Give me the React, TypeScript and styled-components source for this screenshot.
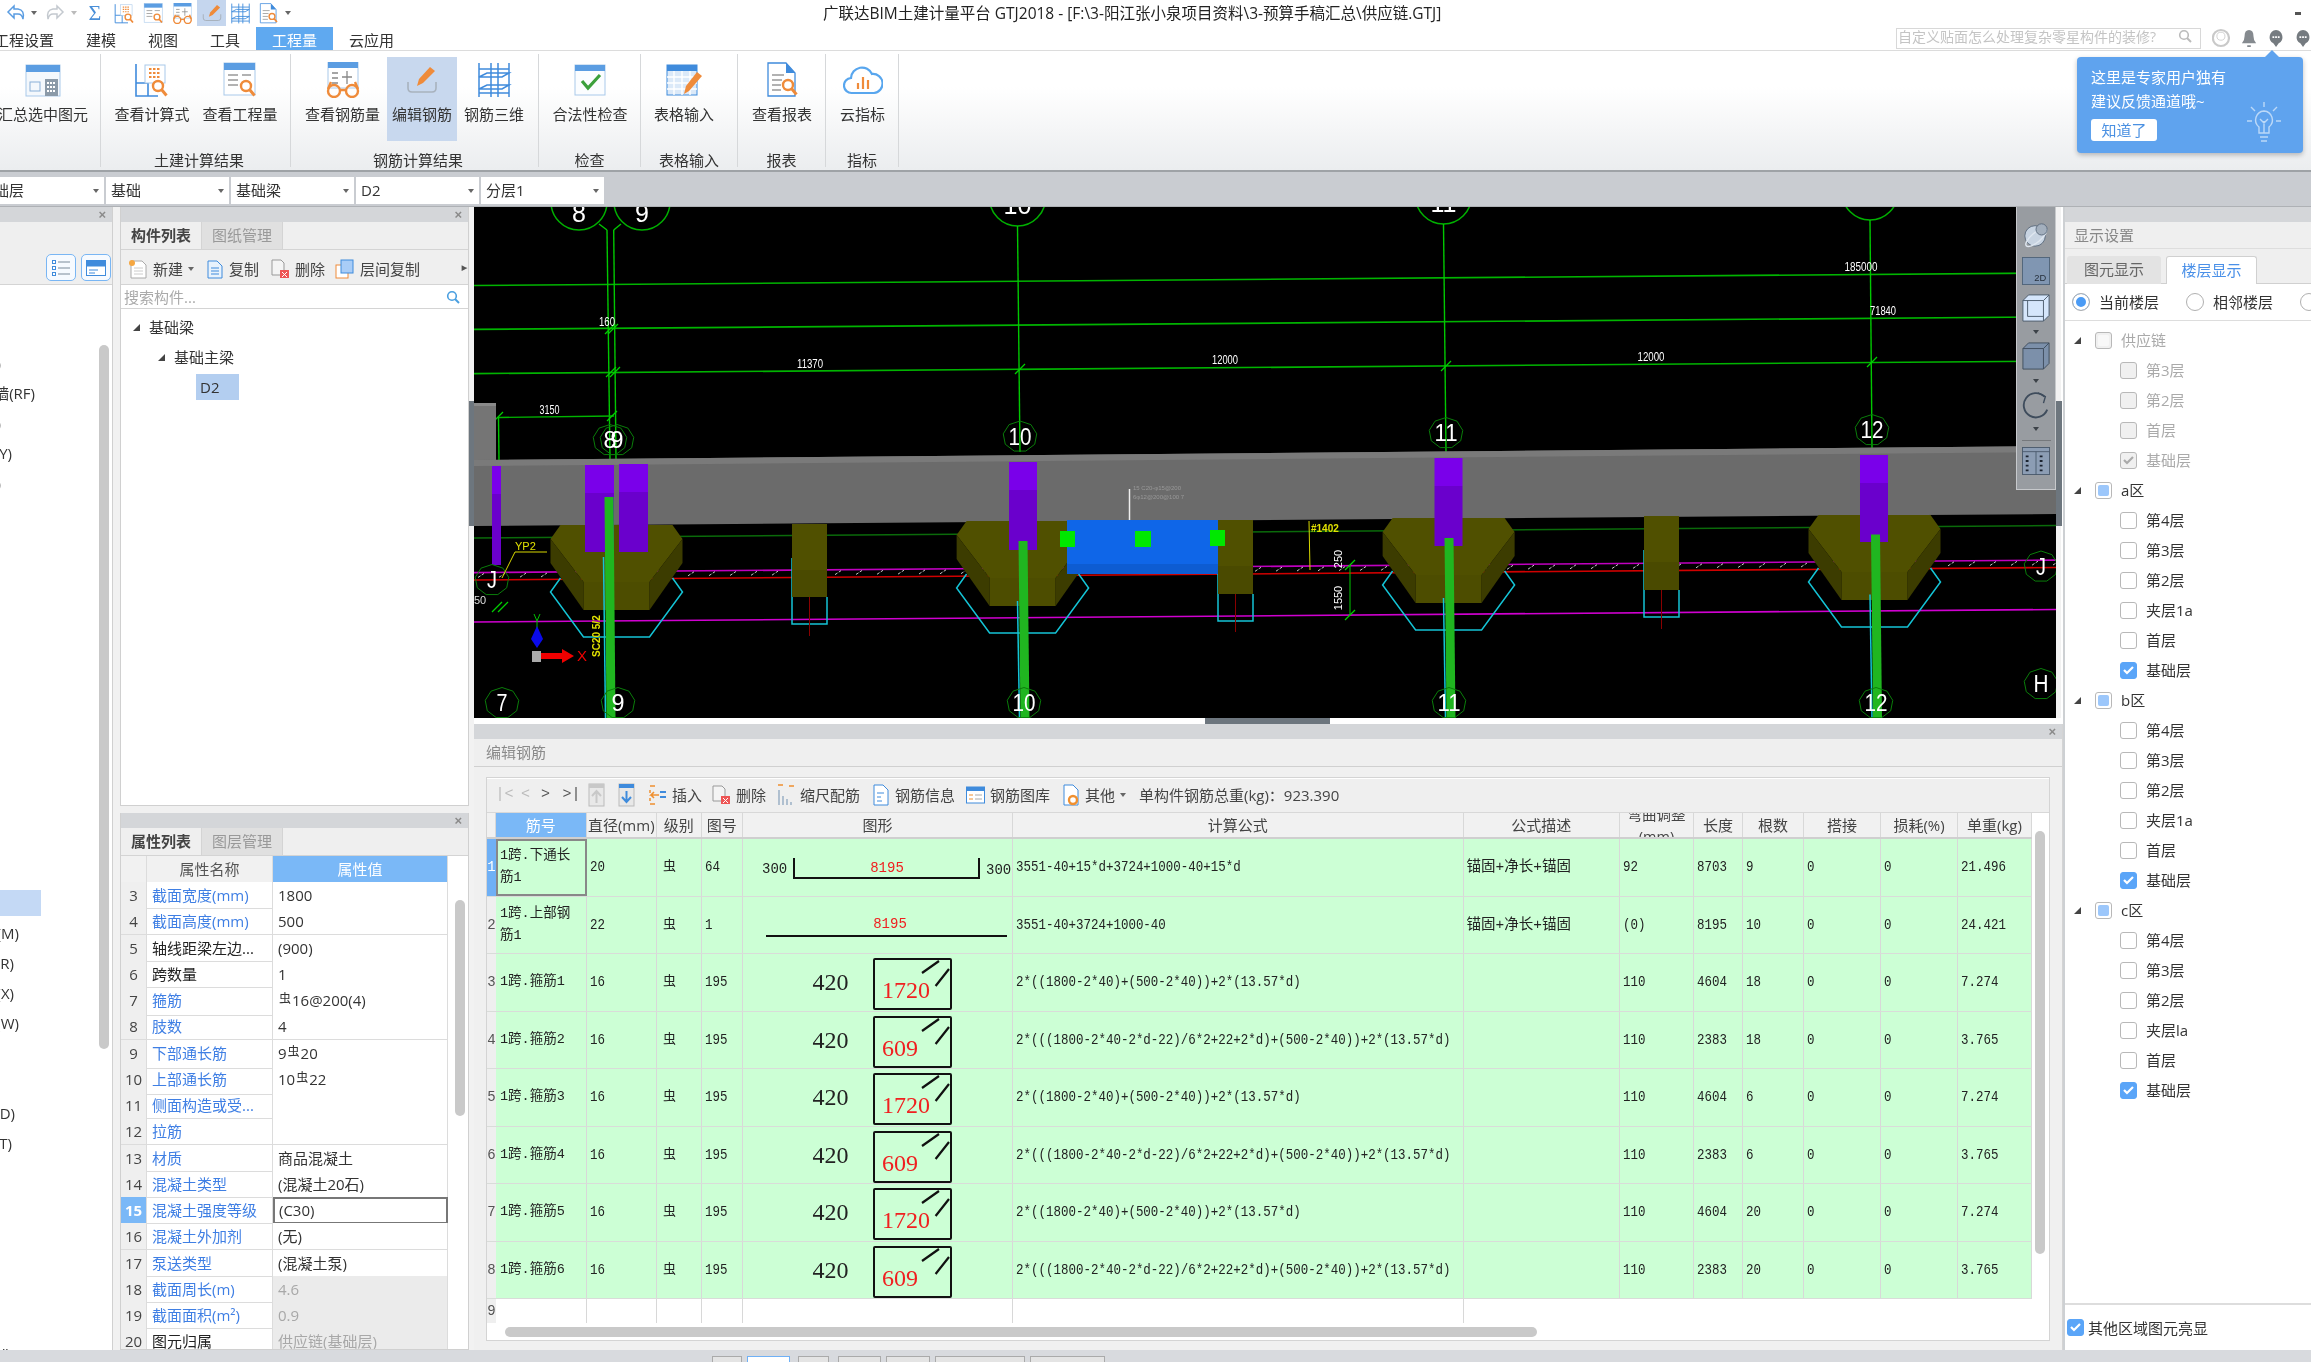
import React from 'react';
import styled, { createGlobalStyle } from 'styled-components';

const Global = createGlobalStyle`
  html, body { margin: 0; padding: 0; overflow: hidden; background: #fff; }
  * { box-sizing: border-box; }
`;

const SANS = `"Open Sans","Noto Sans CJK SC",sans-serif`;
const MONO = `"Liberation Mono","Noto Sans CJK SC",monospace`;

const Page = styled.div`
  position: relative; width: 2311px; height: 1362px; overflow: hidden;
  display: flex; flex-direction: column; background: #fff;
  font: 15px/20px ${SANS}; color: #333; filter: blur(0.5px);
`;

/* ---------- title bar ---------- */
const TitleBar = styled.div`height: 26px; display: flex; align-items: center; flex: none;`;
const Qat = styled.div`display: flex; width: 300px; height: 26px; padding-left: 6px; flex: none;`;
const QatSlot = styled.div<{ $w: number; $on?: boolean }>`
  width: ${p => p.$w}px; height: 26px; display: flex; align-items: center; justify-content: center;
  background: ${p => (p.$on ? '#c5d6ee' : 'transparent')}; flex: none;
  color: #4a8fd8; font: 22px/26px "Liberation Serif", serif;
`;
const Tri = styled.i<{ $c?: string }>`
  display: block; width: 0; height: 0; border-left: 3px solid transparent; border-right: 3px solid transparent;
  border-top: 4px solid ${p => p.$c || '#666'};
`;
const Title = styled.div`margin-left: 523px; font-size: 15.5px; line-height: 26px; color: #222; white-space: nowrap;`;
const MinGlyph = styled.div`margin-left: auto; margin-right: 10px; width: 6px; height: 3px; background: #555;`;

const TabBar = styled.div`
  height: 25px; display: flex; align-items: stretch; flex: none; padding-left: 0;
  border-bottom: 1px solid #dcdcdc;
`;
const TabItem = styled.div<{ $on?: boolean; $first?: boolean }>`
  padding: 0 16px; line-height: ${p => (p.$on ? 26 : 28)}px; font-size: 15px; color: ${p => (p.$on ? '#fff' : '#333')};
  background: ${p => (p.$on ? '#5fa9f0' : 'transparent')}; margin-left: ${p => (p.$first ? '-22px' : '0')};
  margin-top: ${p => (p.$on ? 1 : 0)}px;
`;
const TopRight = styled.div`margin-left: auto; display: flex; align-items: center; height: 22px; margin-top: 1px;`;
const SearchTop = styled.div`
  width: 305px; height: 21px; border: 1px solid #d8d8d8; font-size: 14px; line-height: 15px; color: #c4c4c4;
  display: flex; justify-content: space-between; padding: 0 8px 0 1px; overflow: hidden; white-space: nowrap; background: #fff;
`;
const TopIcons = styled.div`display: flex; width: 110px; padding-left: 11px; gap: 11px; align-items: center;`;

/* ---------- ribbon ---------- */
const Ribbon = styled.div`
  height: 121px; flex: none; display: flex; border-bottom: 2px solid #9ea2a6;
  background: linear-gradient(#fff 0%, #fff 30%, #ebedef 100%);
`;
const Group = styled.div<{ $w: number; $pl?: number }>`
  width: ${p => p.$w}px; flex: none; height: 113px; margin-top: 3px; border-right: 1px solid #d6d8da;
  display: flex; flex-direction: column; padding-left: ${p => p.$pl || 0}px;
`;
const GroupItems = styled.div`display: flex; height: 84px; margin-top: 3px; flex: none;`;
const GroupLabel = styled.div`text-align: center; font-size: 15px; line-height: 16px; margin-top: 11px; color: #333; white-space: nowrap;`;
const RibbonBtn = styled.div<{ $w: number; $on?: boolean }>`
  width: ${p => p.$w}px; flex: none; height: 84px; display: flex; flex-direction: column; align-items: center;
  background: ${p => (p.$on ? '#c8d8ee' : 'transparent')}; white-space: nowrap;
`;
const RibbonIcon = styled.div`height: 43px; margin-top: 1px; display: flex; align-items: center; justify-content: center; flex: none;`;
const RibbonText = styled.div`font-size: 15px; line-height: 20px; margin-top: 3px; color: #333;`;

/* ---------- selects ---------- */
const SelectBar = styled.div`
  height: 35px; flex: none; background: #c9ccd1; display: flex; gap: 2px; padding-top: 5px; margin-left: -21px;
  width: 2332px; border-bottom: 1px solid #aeb1b5;
`;
const Select = styled.div`
  width: 123px; height: 27px; background: #fff; font-size: 15px; line-height: 27px; padding: 0 5px; display: flex;
  align-items: center; justify-content: space-between;
`;
const SelectFirst = styled(Select)`width: 125px; padding-left: 0; justify-content: space-between;`;

/* ---------- main ---------- */
const Main = styled.div`flex: 1; min-height: 0; display: flex; background: #f0f0f0;`;
const PanelStrip = styled.div`
  height: 15px; background: #d4d6d9; flex: none; display: flex; justify-content: flex-end; align-items: center;
  padding-right: 6px; color: #8a8a8a; font: 700 13px/15px "Liberation Sans", sans-serif;
`;

const LeftCol = styled.div`width: 113px; flex: none; display: flex; flex-direction: column; background: #fff; overflow: hidden; border-right: 1px solid #d0d0d0;`;
const LeftTabs = styled.div`height: 28px; background: #efefef; flex: none;`;
const LeftTool = styled.div`
  height: 35px; background: #efefef; border-bottom: 1px solid #d4d4d4; flex: none; display: flex; justify-content: flex-end; gap: 5px;
  padding: 4px 1px 0 0;
`;
const ViewBtn = styled.div`
  width: 30px; height: 27px; border: 1.5px solid #79b6f4; border-radius: 5px; background: #f6faff; display: flex;
  align-items: center; justify-content: center;
`;
const LeftBody = styled.div`flex: 1; display: flex; min-height: 0;`;
const LeftList = styled.div`flex: 1; padding-top: 63px; overflow: hidden; min-width: 0;`;
const LeftRow = styled.div`
  height: 30px; line-height: 30px; font-size: 15px; display: flex; justify-content: flex-end; white-space: nowrap;
`;
const LeftRowInner = styled.div`
  flex: 1; display: flex; align-items: center;
`;
const LeftText = styled.span<{ $end: number }>`
  width: ${p => p.$end}px; display: flex; justify-content: flex-end; flex: none;
`;
const LeftSel = styled.div`width: 41px; height: 26px; background: #c4d9f5;`;
const LeftScroll = styled.div`width: 13px; flex: none; padding-top: 60px;`;
const Thumb = styled.div<{ $w: number; $h: number }>`width: ${p => p.$w}px; height: ${p => p.$h}px; background: #c9c9c9; border-radius: 5px;`;

const GutterA = styled.div`width: 7px; flex: none; background: #f1f1f1;`;
const MidCol = styled.div`width: 349px; flex: none; display: flex; flex-direction: column; gap: 7px; overflow: hidden;`;
const Panel = styled.div<{ $h: number }>`
  height: ${p => p.$h}px; flex: none; display: flex; flex-direction: column; background: #fff;
  border: 1px solid #d0d0d0; border-top: 0; overflow: hidden;
`;
const MidTabs = styled.div`height: 28px; background: #efefef; display: flex; flex: none; border-bottom: 1px solid #d4d4d4;`;
const MidTab = styled.div<{ $on?: boolean }>`
  width: 81px; text-align: center; font-size: 15px; line-height: 27px; font-weight: ${p => (p.$on ? 700 : 400)};
  color: ${p => (p.$on ? '#444' : '#999')}; background: ${p => (p.$on ? '#efefef' : '#e0e0e0')}; border-right: 1px solid #d4d4d4;
`;
const MidTool = styled.div`
  height: 35px; background: #efefef; border-bottom: 1px solid #d4d4d4; display: flex; align-items: center; padding: 3px 0 0 7px; flex: none; color: #444; white-space: nowrap;
`;
const ToolPair = styled.div<{ $w: number }>`width: ${p => p.$w}px; display: flex; align-items: center; gap: 5px; flex: none;`;
const MidSearch = styled.div`
  height: 24px; border-bottom: 1px solid #d4d4d4; display: flex; align-items: center; justify-content: space-between;
  padding: 0 8px 0 3px; color: #aaa; font-size: 15px; flex: none;
`;
const TreeWrap = styled.div`padding-top: 3px; flex: 1;`;
const TreeRow = styled.div<{ $pl: number }>`height: 30px; display: flex; align-items: center; padding-left: ${p => p.$pl}px; gap: 9px; color: #333;`;
const TreeTri = styled.i`
  display: block; width: 0; height: 0; border-bottom: 7px solid #444; border-left: 7px solid transparent; flex: none;
`;
const TreeSel = styled.div`margin: 2px 0 0 75px; width: 43px; height: 26px; background: #b3cef0; padding-left: 4px; line-height: 26px; color: #333;`;

const PropBody = styled.div`flex: 1; display: flex; min-height: 0; overflow: hidden;`;
const PropTable = styled.div`width: 327px; flex: none;`;
const PropCols = `display: grid; grid-template-columns: 26px 126px 175px;`;
const PropHead = styled.div`${PropCols} height: 26px;`;
const PropHeadCell = styled.div<{ $on?: boolean }>`
  text-align: center; line-height: 26px; background: ${p => (p.$on ? '#7ab8f7' : '#f1f1f1')}; color: ${p => (p.$on ? '#fff' : '#555')};
  border-right: 1px solid #dcdcdc;
`;
const PropRow = styled.div`${PropCols} height: 26.25px;`;
const PropNum = styled.div<{ $on?: boolean }>`
  text-align: center; line-height: 26px; background: ${p => (p.$on ? '#7ab8f7' : '#efefef')}; color: ${p => (p.$on ? '#fff' : '#444')};
  font-weight: ${p => (p.$on ? 700 : 400)}; border-right: 1px solid #dcdcdc; border-bottom: 1px solid #dcdcdc;
`;
const PropName = styled.div<{ $blue?: boolean }>`
  padding-left: 5px; line-height: 26px; color: ${p => (p.$blue ? '#3f7fe4' : '#222')}; border-right: 1px solid #dcdcdc; border-bottom: 1px solid #dcdcdc; white-space: nowrap; overflow: hidden;
`;
const PropVal = styled.div<{ $gray?: boolean; $focus?: boolean }>`
  padding-left: ${p => (p.$focus ? '4px' : '5px')}; line-height: ${p => (p.$focus ? '22px' : '26px')}; color: ${p => (p.$gray ? '#a8a8a8' : '#333')};
  background: ${p => (p.$gray ? '#ebebeb' : '#fff')}; border-bottom: 1px solid #dcdcdc; border-right: 1px solid #dcdcdc; white-space: nowrap;
  ${p => p.$focus && 'border: 2px solid #777;'}
`;
const Sym = styled.span`font-size: 12px; position: relative; top: -3px; margin: 0 1px;`;
const PropGutter = styled.div`flex: 1; padding: 44px 0 0 7px; background: #fff;`;

const HandleCol = styled.div`width: 5px; flex: none; padding-top: 194px; background: #f2f2f2;`;
const VHandle = styled.div<{ $w: number }>`width: ${p => p.$w}px; height: 125px; background: #6d767e;`;

const Center = styled.div`width: 1589px; flex: none; display: flex; flex-direction: column; overflow: hidden;`;
const CanvasRow = styled.div`height: 511px; flex: none; display: flex; background: #fff;`;
const CanvasWrap = styled.div`position: relative; width: 1582px; height: 511px; flex: none; background: #000; overflow: hidden;`;
const CadSvg = styled.svg`display: block;`;
const SideTool = styled.div`
  position: absolute; right: 0; top: 0; width: 40px; height: 283px; background: #989ca1; border: 1px solid #c7c9cc; border-top: 0;
  display: flex; flex-direction: column; align-items: center; padding-top: 14px;
`;
const SideGap = styled.div<{ $h: number }>`height: ${p => p.$h}px; flex: none; display: flex; align-items: center; justify-content: center;`;
const SideSep = styled.div`width: 29px; height: 1px; background: #75787c; flex: none; margin: 1px 0 6px;`;
const HRow = styled.div`height: 6px; flex: none; background: #fff; padding-left: 731px;`;
const HHandle = styled.div`width: 125px; height: 6px; background: #6d767e;`;

const EditPanel = styled.div`flex: 1; min-height: 0; display: flex; flex-direction: column; background: #f0f0f0; border-right: 1px solid #d4d4d4;`;
const EditHead = styled.div`height: 28px; background: #efefef; color: #8a8a8a; padding-left: 12px; line-height: 27px; border-bottom: 1px solid #d0d0d0; flex: none;`;
const EditBox = styled.div`
  margin: 10px 12px 0 12px; height: 564px; width: 1564px; flex: none; border: 1px solid #d4d4d4; background: #fff; display: flex; flex-direction: column; overflow: hidden;
`;
const EditTool = styled.div`
  height: 35px; background: #efefef; display: flex; align-items: center; flex: none; border-top: 1px solid #fff; border-bottom: 1px solid #d8d8d8; color: #444; padding: 0 0 2px 7px; white-space: nowrap;
`;
const Nav = styled.div<{ $w: number; $c?: string }>`
  width: ${p => p.$w}px; flex: none; font: 15px/20px "Liberation Mono", monospace; color: ${p => p.$c || '#555'}; text-align: center;
`;
const EditBody = styled.div`flex: 1; display: flex; min-height: 0;`;
const TableCol = styled.div`width: 1545px; flex: none; display: flex; flex-direction: column;`;
const GRID = `display: grid; grid-template-columns: 9px 90.5px 70.5px 44.5px 41.5px 270px 450.5px 156.5px 74px 49px 61px 77px 77px 74px;`;
const HeadRow = styled.div`${GRID} height: 26px; flex: none; border-bottom: 2px solid #cfcfcf; background: #f1f1f1;`;
const HeadCell = styled.div<{ $on?: boolean }>`
  text-align: center; font-size: 15px; line-height: 24px; color: ${p => (p.$on ? '#fff' : '#444')}; background: ${p => (p.$on ? '#7ab8f7' : '#f1f1f1')};
  border-right: 1px solid #d8d8d8; overflow: hidden; white-space: nowrap;
`;
const HeadTwoLine = styled.div`margin-top: -9px; font-size: 14.5px; line-height: 22px;`;
const BodyRow = styled.div<{ $empty?: boolean }>`
  ${GRID} height: 57.5px; flex: none; background: ${p => (p.$empty ? '#fff' : '#ccffd5')}; font: 14.2px/20px ${MONO}; color: #222;
  border-bottom: ${p => (p.$empty ? '0' : '1.5px solid #d9dcd9')};
`;
const Empty = styled(BodyRow)`height: 24px;`;
const RowHead = styled.div<{ $on?: boolean }>`
  background: ${p => (p.$on ? '#6fb0f5' : '#efefef')}; color: ${p => (p.$on ? '#fff' : '#555')}; font: 14px/20px ${MONO}; display: flex; align-items: center; justify-content: center;
  overflow: visible;
`;
const Cell = styled.div`border-right: 1px solid #d8d8d8; padding: 0 3px; display: flex; align-items: center; white-space: nowrap; overflow: hidden;`;
const Sq = styled.span`display: inline-block; transform: scaleX(0.88); transform-origin: left center;`;
const NameCell = styled(Cell)<{ $sel?: boolean }>`
  font: 13.5px/22px ${MONO}; white-space: normal; padding: 0 ${p => (p.$sel ? '2px' : '4px')}; ${p => p.$sel && 'border: 2px solid #888;'}
`;
const DescCell = styled(Cell)`font-size: 14.5px;`;
const ShapeCell = styled.div`border-right: 1px solid #d8d8d8; overflow: hidden;`;
const GradeCell = styled(Cell)`font-size: 13px; padding-left: 6px;`;
const VGutter = styled.div`flex: 1; padding: 18px 0 0 3px; background: #fff;`;
const HBar = styled.div`height: 20px; padding: 4px 0 0 18px; background: #fff; flex: none;`;

const RightCol = styled.div`flex: 1; min-width: 0; display: flex; flex-direction: column; background: #fff; border-left: 2px solid #cdd0d3;`;
const RightHead = styled.div`height: 27px; background: #efefef; color: #888; padding-left: 9px; line-height: 27px; border-bottom: 1px solid #ddd; flex: none;`;
const RightTabs = styled.div`height: 35px; background: #efefef; display: flex; padding: 7px 0 0 2px; gap: 5px; border-bottom: 1px solid #d0d0d0; flex: none;`;
const RightTab = styled.div<{ $on?: boolean }>`
  width: ${p => (p.$on ? 91 : 94)}px; height: 28px; text-align: center; line-height: 27px; border-radius: 3px 3px 0 0;
  background: ${p => (p.$on ? '#fff' : '#e3e3e3')}; color: ${p => (p.$on ? '#4a90e8' : '#666')};
  ${p => p.$on && 'border: 1px solid #d0d0d0; border-bottom: 0;'}
`;
const RadioRow = styled.div`height: 37px; display: flex; align-items: center; padding-left: 7px; border-bottom: 1px solid #ddd; flex: none; white-space: nowrap;`;
const RadioItem = styled.div`display: flex; align-items: center; gap: 9px; width: 114px; flex: none;`;
const Radio = styled.i<{ $on?: boolean }>`
  display: block; width: 18px; height: 18px; border-radius: 50%; border: 1.5px solid #b0b0b0; background: #fff; flex: none;
  ${p => p.$on && 'box-shadow: inset 0 0 0 3px #fff; background: #4a9bf5;'}
`;
const FloorTree = styled.div`flex: 1; padding-top: 4px; overflow: hidden;`;
const FloorRow = styled.div<{ $child?: boolean; $dim?: boolean }>`
  height: 30px; display: flex; align-items: center; padding-left: ${p => (p.$child ? 55 : 9)}px; color: ${p => (p.$dim ? '#aaa' : '#333')};
`;
const FloorTri = styled(TreeTri)`margin-right: 14px;`;
const Box = styled.i<{ $state: 'off' | 'on' | 'part' | 'dimoff' | 'dimon' | 'dimpart' }>`
  width: 17px; height: 17px; border-radius: 3px; display: flex; align-items: center; justify-content: center; flex: none; margin-right: 9px;
  border: 1.5px solid ${p => (p.$state === 'on' ? '#5aa5f8' : '#b8b8b8')};
  background: ${p => (p.$state === 'on' ? '#5aa5f8' : p.$state.startsWith('dim') ? '#f0f0f0' : '#fff')};
`;
const BoxInner = styled.i<{ $c: string }>`display: block; width: 11px; height: 11px; border-radius: 2px; background: ${p => p.$c};`;
const RightFoot = styled.div`height: 47px; border-top: 2px solid #ddd; display: flex; align-items: center; padding-left: 2px; flex: none;`;
const FootBox = styled(Box)`margin-right: 4px;`;

const BottomStrip = styled.div`height: 12px; flex: none; background: #d8dade; display: flex; padding: 6px 0 0 712px; overflow: hidden;`;
const Stub = styled.div<{ $w: number; $ml: number; $on?: boolean }>`
  width: ${p => p.$w}px; margin-left: ${p => p.$ml}px; height: 12px; flex: none;
  background: ${p => (p.$on ? '#fff' : '#e4e4e4')}; border: 1px solid ${p => (p.$on ? '#6fb0f5' : '#aaa')}; border-bottom: 0;
`;

/* popover */
const Pop = styled.div`
  position: absolute; left: 2077px; top: 57px; width: 226px; height: 96px; background: #5fa3ee; border-radius: 4px; box-shadow: 0 2px 5px rgba(0,0,0,.25);
  color: #fff; padding: 8px 0 0 14px; font-size: 15px; line-height: 24px; display: flex; flex-direction: column;
  &::before { content: ''; position: absolute; left: 188px; top: -7px; border: 7px solid transparent; border-top: 0; border-bottom-color: #5fa3ee; }
`;
const PopBtn = styled.div`width: 66px; height: 22px; margin-top: 6px; background: #fff; color: #4a90e2; border-radius: 3px; text-align: center; line-height: 22px; font-size: 15px;`;
const PopBulb = styled.svg`position: absolute; right: 22px; bottom: 8px;`;

const CadT = styled.text`font-family: "Liberation Sans", sans-serif; fill: #fff; text-anchor: middle;`;

/* ---------- icons ---------- */
const B = '#3f8bdc', O = '#ef8b3a', L = '#a9c9ea';
const Mag = ({ x, y }: { x: number; y: number }) => (
  <g fill="none" stroke={O} strokeWidth="2.4"><circle cx={x} cy={y} r="5" fill="#fff" /><path d={`M${x + 3.5} ${y + 3.5}l5 6`} strokeWidth="3" /></g>
);
type IP = { s?: number };
const IconSummary = ({ s = 36 }: IP) => (
  <svg width={s} height={s} viewBox="0 0 36 36"><rect x="1" y="3" width="34" height="31" fill="#f4f8fc" stroke={L} /><rect x="1" y="3" width="34" height="7" fill="#5b9de2" />
    <rect x="5" y="20" width="10" height="9" fill="none" stroke="#8ab0d8" /><rect x="20" y="17" width="13" height="17" fill="#8b9aa8" />
    <path d="M22 21h9M22 25h9M22 29h9" stroke="#fff" strokeWidth="2" strokeDasharray="2 1" /></svg>
);
const IconCalc = ({ s = 36 }: IP) => (
  <svg width={s} height={s} viewBox="0 0 36 36"><path d="M2 2v32h22M2 21h12v13" fill="none" stroke={B} strokeWidth="1.6" /><rect x="11" y="3" width="20" height="18" fill="#fff" stroke={L} />
    <path d="M15 7h11M15 11h11M15 15h11" stroke={O} strokeWidth="2" strokeDasharray="2.5 1.5" /><Mag x={24} y={24} /></svg>
);
const IconQty = ({ s = 36 }: IP) => (
  <svg width={s} height={s} viewBox="0 0 36 36"><rect x="2" y="1" width="31" height="32" fill="#fff" stroke={L} /><rect x="2" y="1" width="31" height="7" fill="#5b9de2" />
    <path d="M6 13h10M6 18h10M6 23h10M20 13h9" stroke="#999" strokeWidth="1.4" /><Mag x={24} y={24} /></svg>
);
const IconGlasses = ({ s = 36 }: IP) => (
  <svg width={s} height={s} viewBox="0 0 36 36"><rect x="3" y="0" width="30" height="26" fill="#fff" stroke={L} /><rect x="3" y="0" width="30" height="6" fill="#5b9de2" />
    <path d="M7 11h6M7 16h6M7 21h6M22 9v13M17 15h10" stroke="#888" strokeWidth="1.3" fill="none" />
    <g fill="none" stroke={O} strokeWidth="2.4"><circle cx="9" cy="29" r="6" /><circle cx="27" cy="29" r="6" /><path d="M15 28h6M3 27l3-7M33 27l-3-7" /></g></svg>
);
const IconEdit = ({ s = 32 }: IP) => (
  <svg width={s} height={s} viewBox="0 0 32 32"><path d="M2 18v6q0 4 4 4h20q4 0 4-4v-6" fill="none" stroke="#a8b2bd" strokeWidth="1.6" /><path d="M11 22l2-7L24 3l5 4L17 19z" fill={O} /></svg>
);
const IconRebar = ({ s = 36 }: IP) => (
  <svg width={s} height={s} viewBox="0 0 36 36"><g fill="none" stroke={B} strokeWidth="1.5"><path d="M3 1v34M15 1v34M22 1v34M33 1v34M3 7h30M3 31h30" /><path d="M3 15L11 11h22L26 15zM3 27l8-4h22l-7 4z" /></g></svg>
);
const IconCheck = ({ s = 34 }: IP) => (
  <svg width={s} height={s} viewBox="0 0 34 34"><rect x="2" y="2" width="30" height="30" fill="#fbfdff" stroke={L} /><rect x="2" y="2" width="30" height="6" fill="#5b9de2" /><path d="M9 18l6 7L27 12" fill="none" stroke="#3ca03c" strokeWidth="3.2" /></svg>
);
const IconTable = ({ s = 36 }: IP) => (
  <svg width={s} height={s} viewBox="0 0 36 36"><rect x="1" y="3" width="30" height="30" fill="#dbe9f8" stroke={B} /><rect x="1" y="3" width="30" height="6" fill={B} />
    <path d="M1 15h30M1 21h30M1 27h30M8 9v24M16 9v24M24 9v24" stroke="#fff" strokeWidth="1.4" /><path d="M18 32l2-8L31 10l5 4L23 29z" fill={O} /></svg>
);
const IconReport = ({ s = 36 }: IP) => (
  <svg width={s} height={s} viewBox="0 0 36 36"><path d="M4 1h18l9 10v23H4z" fill="#fff" stroke={B} strokeWidth="1.3" /><path d="M22 1l9 10h-9z" fill={B} /><path d="M8 13h12M8 18h10M8 23h9M8 28h9" stroke="#999" strokeWidth="1.4" /><Mag x={24} y={23} /></svg>
);
const IconCloud = ({ s = 40 }: IP) => (
  <svg width={s} height={s * 0.75} viewBox="0 0 40 30"><path d="M9 28a7.5 7.5 0 0 1-1-15A11 11 0 0 1 29 9a9.5 9.5 0 0 1 2 19z" fill="none" stroke="#58a6ee" strokeWidth="2.2" /><path d="M15 24v-6M20 24V12M25 24v-9" stroke={O} strokeWidth="2.2" /></svg>
);
const Undo = ({ c }: { c: string }) => (
  <svg width="20" height="20" viewBox="0 0 20 20"><path d="M8 3L2 9l6 6v-4h4q4 0 5 5 2-9-5-10H8z" fill="none" stroke={c} strokeWidth="1.5" /></svg>
);
const Redo = ({ c }: { c: string }) => (
  <svg width="20" height="20" viewBox="0 0 20 20"><path d="M12 3l6 6-6 6v-4H8q-4 0-5 5-2-9 5-10h4z" fill="none" stroke={c} strokeWidth="1.5" /></svg>
);
const SearchGlyph = ({ c = '#aaa' }: { c?: string }) => (
  <svg width="14" height="14" viewBox="0 0 14 14"><circle cx="6" cy="6" r="4.3" fill="none" stroke={c} strokeWidth="1.6" /><path d="M9 9l4 4" stroke={c} strokeWidth="2" /></svg>
);
const UserG = () => (<svg width="20" height="22" viewBox="0 0 20 22"><circle cx="10" cy="11" r="9" fill="none" stroke="#c9c9c9" strokeWidth="2.4" /><circle cx="10" cy="9" r="4.5" fill="#fff" stroke="#ccc" /></svg>);
const BellG = () => (<svg width="18" height="22" viewBox="0 0 18 22"><path d="M9 2q5 0 5 7 0 5 3 8H1q3-3 3-8 0-7 5-7zM7 19h4v2H7z" fill="#858a8f" /></svg>);
const ChatG = () => (<svg width="18" height="22" viewBox="0 0 18 22"><path d="M9 2a8 8 0 0 1 3 15l-3 4-3-4A8 8 0 0 1 9 2z" fill="#757b80" /><path d="M5 10h8" stroke="#fff" strokeWidth="2" strokeDasharray="2 1" /></svg>);

const NewDoc = () => (<svg width="20" height="20" viewBox="0 0 20 20"><path d="M3 2h11l4 4v13H3z" fill="#fff" stroke="#aaa" /><path d="M6 9h9M6 12h9M6 15h9" stroke="#ccc" /><circle cx="4" cy="4" r="3" fill="#f5a742" /></svg>);
const CopyDoc = () => (<svg width="18" height="20" viewBox="0 0 18 20"><path d="M2 2h9l5 5v12H2z" fill="#e8f2fc" stroke={B} /><path d="M5 9h8M5 12h8M5 15h8" stroke={B} /></svg>);
const DelDoc = () => (<svg width="20" height="20" viewBox="0 0 20 20"><path d="M2 1h9l3 3v12H2z" fill="#f4f4f4" stroke="#999" /><rect x="10" y="11" width="9" height="8" fill="#e55" /><path d="M12 13l5 5M17 13l-5 5" stroke="#fff" /></svg>);
const LayerDoc = () => (<svg width="20" height="20" viewBox="0 0 20 20"><rect x="1" y="6" width="12" height="13" fill="#fff" stroke={O} /><rect x="6" y="1" width="12" height="13" fill="#a9cdf7" stroke={B} /></svg>);
const ListG = () => (<svg width="18" height="16" viewBox="0 0 18 16"><path d="M6 2h12M6 8h12M6 14h12" stroke="#7a8a9a" strokeWidth="1.2" /><rect x="0.5" y="0.5" width="3" height="3" fill="#fff" stroke={B} /><rect x="0.5" y="6.5" width="3" height="3" fill="#fff" stroke={B} /><rect x="0.5" y="12.5" width="3" height="3" fill="#fff" stroke={B} /></svg>);
const FormG = () => (<svg width="20" height="16" viewBox="0 0 20 16"><rect x="0.5" y="0.5" width="19" height="15" fill="#fff" stroke={B} /><rect x="0.5" y="0.5" width="19" height="6" fill={B} /><path d="M3 10h9M3 13h6" stroke={B} /></svg>);
const UpBox = ({ c, d }: { c: string; d: string }) => (<svg width="17" height="24" viewBox="0 0 17 24"><rect x="1" y="1" width="15" height="22" fill="#e8e8e8" stroke="#bbb" /><rect x="1" y="1" width="15" height="4" fill={c} /><path d={d} fill="none" stroke={c} strokeWidth="2" /></svg>);
const InsertG = () => (<svg width="18" height="22" viewBox="0 0 18 22"><path d="M1 2h5M1 20h5M1 6v3M1 14v3" stroke="#f09030" strokeWidth="1.5" /><path d="M10 11H2l3-3M2 11l3 3" stroke="#f09030" strokeWidth="1.6" fill="none" /><path d="M11 8h6M11 13h6" stroke={B} strokeWidth="2" /></svg>);
const ScaleG = () => (<svg width="18" height="22" viewBox="0 0 18 22"><path d="M1 1h5M12 2h5" stroke="#f09030" strokeWidth="1.5" /><path d="M2 6v15M6 12v9M10 15v6M14 18v3" stroke="#a0b4c8" strokeWidth="1.6" /></svg>);
const InfoG = () => (<svg width="18" height="22" viewBox="0 0 18 22"><path d="M2 1h9l5 5v15H2z" fill="#fff" stroke={B} /><path d="M5 9h7M5 13h4M5 17h5" stroke={B} /></svg>);
const LibG = () => (<svg width="19" height="18" viewBox="0 0 19 18"><rect x="0.5" y="1" width="18" height="16" fill="#fff" stroke={B} /><rect x="0.5" y="1" width="18" height="4" fill={B} /><path d="M3 9h4M3 13h4" stroke="#f09030" /><path d="M9 9h7M9 13h7" stroke="#aaa" /></svg>);
const OtherG = () => (<svg width="18" height="22" viewBox="0 0 18 22"><path d="M2 1h9l5 5v15H2z" fill="#fff" stroke={B} /><circle cx="11" cy="16" r="4" fill="none" stroke="#f09030" strokeWidth="2.4" /></svg>);
const CheckMark = ({ c = '#fff' }: { c?: string }) => (<svg width="11" height="9" viewBox="0 0 11 9"><path d="M1 4l3 3 6-6" fill="none" stroke={c} strokeWidth="2.2" /></svg>);

/* ---------- CAD drawing ---------- */
const yH = (y0: number, x: number) => y0 - (x - 474) * 0.0079;
const Hline = ({ y0, c, w }: { y0: number; c: string; w: number }) => <line x1={474} x2={2056} y1={yH(y0, 474)} y2={yH(y0, 2056)} stroke={c} strokeWidth={w} />;

const Footing = ({ cx, t }: { cx: number; t: number }) => (
  <g>
    <polygon points={`${cx - 56},${t} ${cx + 56},${t} ${cx + 66},${t + 14} ${cx + 33},${t + 57} ${cx - 33},${t + 57} ${cx - 66},${t + 14}`} fill="#505000" />
    <polygon points={`${cx - 66},${t + 14} ${cx - 33},${t + 57} ${cx - 33},${t + 85} ${cx - 66},${t + 38}`} fill="#3c3c00" />
    <polygon points={`${cx + 66},${t + 14} ${cx + 33},${t + 57} ${cx + 33},${t + 85} ${cx + 66},${t + 38}`} fill="#3c3c00" />
    <rect x={cx - 33} y={t + 57} width={66} height={28} fill="#4d4d00" />
  </g>
);
const CyanHex = ({ cx, t }: { cx: number; t: number }) => (
  <polyline points={`${cx - 56},${t + 53} ${cx - 66},${t + 67} ${cx - 33},${t + 112} ${cx + 33},${t + 112} ${cx + 66},${t + 67} ${cx + 56},${t + 53}`} fill="none" stroke="#14c4d6" strokeWidth="1.5" />
);
const Stump = ({ x, w, t, b, cb, red }: { x: number; w: number; t: number; b: number; cb: number; red: number }) => (
  <g>
    <path d={`M${x} ${t + 34}V${cb}H${x + w}V${b}`} fill="none" stroke="#14c4d6" strokeWidth="1.5" />
    <line x1={x + w / 2} x2={x + w / 2} y1={b} y2={red} stroke="#8a0000" />
    <rect x={x} y={t} width={w} height={46} fill="#505000" />
    <rect x={x} y={t + 46} width={w} height={b - t - 46} fill="#4a4a00" />
  </g>
);
const Purple = ({ x, w, t, b }: { x: number; w: number; t: number; b: number }) => (
  <g><rect x={x} y={t} width={w} height={28} fill="#7a00ea" /><rect x={x} y={t + 28} width={w} height={b - t - 28} fill="#6a00cc" /></g>
);
const GreenPost = ({ x, t }: { x: number; t: number }) => (
  <g>
    <line x1={x - 1} x2={x + 1} y1={t + 60} y2={718} stroke="#14c4d6" strokeWidth="1.5" />
    <polygon points={`${x},${t} ${x + 9},${t} ${x + 11},718 ${x + 2},718`} fill="#20b620" />
  </g>
);
const OctoLabel = ({ x, y, t, w }: { x: number; y: number; t: string; w: number }) => {
  const pts = Array.from({ length: 9 }, (_, i) => {
    const a = (i * Math.PI * 2) / 9 - Math.PI / 2;
    return `${x + Math.cos(a) * 17},${y + Math.sin(a) * 15.5}`;
  }).join(' ');
  return (
    <g>
      <polygon points={pts} fill="none" stroke="#0a7d0a" />
      <CadT x={x} y={y + 8} fontSize="23" textLength={w} lengthAdjust="spacingAndGlyphs">{t}</CadT>
    </g>
  );
};
const Dim = ({ x, y, t, w }: { x: number; y: number; t: string; w: number }) => (
  <CadT x={x} y={y + 4.5} fontSize="12" textLength={w} lengthAdjust="spacingAndGlyphs">{t}</CadT>
);
const Vert = ({ x1, y1, x2, y2 }: { x1: number; y1: number; x2: number; y2: number }) => (
  <line x1={x1} y1={y1} x2={x2} y2={y2} stroke="#00c800" strokeWidth="1.4" />
);
const Tick = ({ x, y }: { x: number; y: number }) => <line x1={x - 5} y1={y + 5} x2={x + 5} y2={y - 5} stroke="#00d000" strokeWidth="1.3" />;
const TopCircle = ({ x, y, t, by }: { x: number; y: number; t: string; by: number }) => (
  <g>
    <circle cx={x} cy={y} r={28} fill="none" stroke="#00b000" strokeWidth="1.5" />
    {t && <CadT x={x} y={by} fontSize="25">{t}</CadT>}
  </g>
);

const CadDrawing = () => {
  const hatches: number[] = [];
  for (let x = 478; x < 2056; x += 21) hatches.push(x);
  return (
    <CadSvg width={1582} height={511} viewBox="474 207 1582 511">
      <rect x="474" y="207" width="1582" height="511" fill="#000" />
      <Hline y0={285.5} c="#00b400" w={1.6} />
      <Hline y0={329.4} c="#00b400" w={1.6} />
      <Hline y0={373.6} c="#00b400" w={1.6} />
      <Hline y0={538} c="#0a6a0a" w={1.5} />
      <Hline y0={572.6} c="#c000c0" w={1.6} />
      <Hline y0={580} c="#d00000" w={1.6} />
      <Hline y0={622} c="#d000d0" w={1.6} />
      {hatches.map((x, i) => (
        <line key={i} x1={x} y1={yH(577.5, x)} x2={x + 6} y2={yH(573.5, x)} stroke="#ddd" strokeWidth="0.9" strokeDasharray="3 1.5" />
      ))}
      <TopCircle x={579} y={202} t="8" by={222} />
      <TopCircle x={642} y={202} t="9" by={222} />
      <TopCircle x={1017.5} y={198} t="10" by={214} />
      <TopCircle x={1443.5} y={196} t="11" by={212} />
      <TopCircle x={1870} y={192} t="" by={200} />
      <Vert x1={599} y1={224} x2={607} y2={230} />
      <Vert x1={621} y1={224} x2={613.7} y2={230} />
      <Vert x1={607} y1={230} x2={610} y2={460} />
      <Vert x1={613.7} y1={230} x2={616} y2={460} />
      <Vert x1={1017.5} y1={226} x2={1020} y2={452} />
      <Vert x1={1443.5} y1={224} x2={1446} y2={452} />
      <Vert x1={1870} y1={220} x2={1872} y2={448} />
      <Vert x1={498.5} y1={417} x2={499} y2={460} />
      <line x1={498.5} y1={417.5} x2={614} y2={416} stroke="#00b400" strokeWidth="1.4" />
      {[[610, 329], [613, 329], [611, 372], [615, 372], [1020, 369], [1446, 366], [1872, 362], [498, 417], [612, 416]].map(([x, y], i) => <Tick key={i} x={x} y={y} />)}

      <rect x="474" y="403" width="22" height="57" fill="#757575" />
      <rect x="474" y="403" width="22" height="3" fill="#8a8a8a" />
      <Dim x={607} y={321} t="160" w={16} />
      <Dim x={810} y={363} t="11370" w={26} />
      <Dim x={1225} y={359.5} t="12000" w={26} />
      <Dim x={549.5} y={409} t="3150" w={20} />
      <Dim x={1651} y={356} t="12000" w={27} />
      <Dim x={1861} y={266.5} t="185000" w={33} />
      <Dim x={1883} y={310.5} t="71840" w={26} />

      <polygon points="474,460 2056,446 2056,514 474,526" fill="#6b6b6b" />
      <polygon points="474,460 2056,446 2056,452 474,466" fill="#7a7a7a" />

      <CyanHex cx={616.5} t={525} />
      <CyanHex cx={1022.6} t={521} />
      <CyanHex cx={1448.6} t={518} />
      <CyanHex cx={1874.5} t={515} />
      <Stump x={792} w={35} t={524} b={597} cb={624} red={636} />
      <Stump x={1218} w={35} t={520} b={594} cb={621} red={632} />
      <Stump x={1644} w={35} t={516} b={590} cb={617} red={629} />
      <Footing cx={616.5} t={525} />
      <Footing cx={1022.6} t={521} />
      <Footing cx={1448.6} t={518} />
      <Footing cx={1874.5} t={515} />

      <rect x="1067" y="520" width="151" height="54" fill="#0f66e8" />
      <rect x="1067" y="564" width="151" height="10" fill="#0d5cd2" />
      <rect x="1060" y="531" width="15" height="16" fill="#00e800" />
      <rect x="1135" y="531" width="16" height="16" fill="#00e800" />
      <rect x="1210" y="530" width="15" height="16" fill="#00e800" />
      <line x1="1129.5" y1="489" x2="1129.5" y2="520" stroke="#eee" strokeWidth="1.5" />
      <text x="1133" y="490" fontSize="6" fill="#999" fontFamily="Liberation Sans">15 C20-φ15@200</text>
      <text x="1133" y="499" fontSize="6" fill="#999" fontFamily="Liberation Sans">6φ12@200@100 7</text>
      <line x1="1309" y1="521" x2="1310" y2="570" stroke="#d8d800" />
      <text x="1311" y="532" fontSize="10" fill="#e0e000" fontWeight="700" fontFamily="Liberation Sans">#1402</text>

      <Purple x={492} w={9} t={466} b={565} />
      <Purple x={585} w={29} t={465} b={552} />
      <Purple x={619} w={29} t={464} b={552} />
      <Purple x={1009} w={28} t={462} b={550} />
      <Purple x={1434.5} w={28} t={458} b={546} />
      <Purple x={1860} w={28} t={455} b={542} />
      <GreenPost x={604.5} t={497} />
      <GreenPost x={1018.5} t={541} />
      <GreenPost x={1444.5} t={538} />
      <GreenPost x={1871} t={534.5} />

      <OctoLabel x={610} y={440} t="8" w={13} />
      <OctoLabel x={617} y={440} t="9" w={13} />
      <OctoLabel x={1020} y={436.5} t="10" w={23} />
      <OctoLabel x={1446} y={433} t="11" w={23} />
      <OctoLabel x={1872} y={430} t="12" w={23} />
      <OctoLabel x={502} y={703} t="7" w={11} />
      <OctoLabel x={618} y={703} t="9" w={13} />
      <OctoLabel x={1024} y={703} t="10" w={23} />
      <OctoLabel x={1449} y={703} t="11" w={23} />
      <OctoLabel x={1876} y={703} t="12" w={23} />
      <OctoLabel x={2041} y={566.5} t="J" w={10} />
      <OctoLabel x={2041} y={684} t="H" w={15} />
      <OctoLabel x={492} y={580} t="J" w={10} />

      <path d="M515 552h32M515 552l-13 26" stroke="#d8d800" fill="none" />
      <text x="515" y="550" fontSize="11" fill="#e0e000" fontFamily="Liberation Sans">YP2</text>
      <text x="0" y="0" fontSize="10" fill="#e0e000" fontFamily="Liberation Sans" fontWeight="700" transform="translate(600,657) rotate(-90)">SC20 5/2</text>
      <text x="0" y="0" fontSize="11" fill="#fff" fontFamily="Liberation Sans" textAnchor="middle" transform="translate(1342,559) rotate(-90)">250</text>
      <text x="0" y="0" fontSize="11" fill="#fff" fontFamily="Liberation Sans" textAnchor="middle" transform="translate(1342,598) rotate(-90)">1550</text>
      <line x1="1350" y1="565" x2="1350" y2="615" stroke="#00c800" />
      <Tick x={1350} y={565} /><Tick x={1350} y={615} />
      <Tick x={497} y={607} /><Tick x={503} y={607} />
      <text x="474" y="604" fontSize="11" fill="#ddd" fontFamily="Liberation Sans">50</text>

      <path d="M537 621l-3-7M537 621l3-7M537 621v8" stroke="#00c000" fill="none" />
      <path d="M537 626l6 13-6 9-6-9z" fill="#0a0aea" />
      <rect x="532" y="651" width="9" height="11" fill="#aaa" />
      <polygon points="541,653 562,653 562,649 574,656 562,663 562,659 541,659" fill="#f00000" />
      <text x="582" y="661" fontSize="15" fill="#f00000" fontFamily="Liberation Sans" textAnchor="middle">X</text>
    </CadSvg>
  );
};

const SideIcon = ({ children }: { children: React.ReactNode }) => (
  <svg width="28" height="28" viewBox="0 0 30 30" style={{ flex: 'none' }}>{children}</svg>
);

/* ---------- data ---------- */
type PropRowT = { n: number; name: string; blue?: boolean; val?: string; gray?: boolean; focus?: boolean };
const props: PropRowT[] = [
  { n: 3, name: '截面宽度(mm)', blue: true, val: '1800' },
  { n: 4, name: '截面高度(mm)', blue: true, val: '500' },
  { n: 5, name: '轴线距梁左边...', val: '(900)' },
  { n: 6, name: '跨数量', val: '1' },
  { n: 7, name: '箍筋', blue: true, val: '虫16@200(4)' },
  { n: 8, name: '肢数', blue: true, val: '4' },
  { n: 9, name: '下部通长筋', blue: true, val: '9虫20' },
  { n: 10, name: '上部通长筋', blue: true, val: '10虫22' },
  { n: 11, name: '侧面构造或受...', blue: true, val: '' },
  { n: 12, name: '拉筋', blue: true, val: '' },
  { n: 13, name: '材质', blue: true, val: '商品混凝土' },
  { n: 14, name: '混凝土类型', blue: true, val: '(混凝土20石)' },
  { n: 15, name: '混凝土强度等级', blue: true, val: '(C30)', focus: true },
  { n: 16, name: '混凝土外加剂', blue: true, val: '(无)' },
  { n: 17, name: '泵送类型', blue: true, val: '(混凝土泵)' },
  { n: 18, name: '截面周长(m)', blue: true, val: '4.6', gray: true },
  { n: 19, name: '截面面积(m²)', blue: true, val: '0.9', gray: true },
  { n: 20, name: '图元归属', val: '供应链(基础层)', gray: true },
];
const PropValue = ({ v }: { v: string }) => {
  const parts = v.split('虫');
  if (parts.length === 1) return <>{v}</>;
  return <>{parts[0]}<Sym>虫</Sym>{parts[1]}</>;
};

const F1 = '2*((1800-2*40)+(500-2*40))+2*(13.57*d)';
const F2 = '2*(((1800-2*40-2*d-22)/6*2+22+2*d)+(500-2*40))+2*(13.57*d)';
type Rebar = { name: string; d: string; fig: string; shape: 'U' | 'L' | '1720' | '609'; f: string; desc: string; bend: string; len: string; cnt: string; w: string };
const rebars: Rebar[] = [
  { name: '1跨.下通长筋1', d: '20', fig: '64', shape: 'U', f: '3551-40+15*d+3724+1000-40+15*d', desc: '锚固+净长+锚固', bend: '92', len: '8703', cnt: '9', w: '21.496' },
  { name: '1跨.上部钢筋1', d: '22', fig: '1', shape: 'L', f: '3551-40+3724+1000-40', desc: '锚固+净长+锚固', bend: '(0)', len: '8195', cnt: '10', w: '24.421' },
  { name: '1跨.箍筋1', d: '16', fig: '195', shape: '1720', f: F1, desc: '', bend: '110', len: '4604', cnt: '18', w: '7.274' },
  { name: '1跨.箍筋2', d: '16', fig: '195', shape: '609', f: F2, desc: '', bend: '110', len: '2383', cnt: '18', w: '3.765' },
  { name: '1跨.箍筋3', d: '16', fig: '195', shape: '1720', f: F1, desc: '', bend: '110', len: '4604', cnt: '6', w: '7.274' },
  { name: '1跨.箍筋4', d: '16', fig: '195', shape: '609', f: F2, desc: '', bend: '110', len: '2383', cnt: '6', w: '3.765' },
  { name: '1跨.箍筋5', d: '16', fig: '195', shape: '1720', f: F1, desc: '', bend: '110', len: '4604', cnt: '20', w: '7.274' },
  { name: '1跨.箍筋6', d: '16', fig: '195', shape: '609', f: F2, desc: '', bend: '110', len: '2383', cnt: '20', w: '3.765' },
];
const heads = ['直径(mm)', '级别', '图号', '图形', '计算公式', '公式描述', '', '长度', '根数', '搭接', '损耗(%)', '单重(kg)'];

const RebarShape = ({ s }: { s: Rebar['shape'] }) => {
  const mono = 'Liberation Mono';
  const serif = 'Liberation Serif';
  if (s === 'U') {
    return (
      <svg width="270" height="56" viewBox="0 0 270 56">
        <text x="19" y="34" fontSize="14" fontFamily={mono} fill="#222">300</text>
        <path d="M51 19v20h185V19" fill="none" stroke="#111" strokeWidth="2" />
        <text x="144" y="33" fontSize="14" fontFamily={mono} fill="#f02020" textAnchor="middle">8195</text>
        <text x="243" y="35" fontSize="14" fontFamily={mono} fill="#222">300</text>
      </svg>
    );
  }
  if (s === 'L') {
    return (
      <svg width="270" height="56" viewBox="0 0 270 56">
        <text x="147" y="31" fontSize="14" fontFamily={mono} fill="#f02020" textAnchor="middle">8195</text>
        <line x1="23" x2="264" y1="39" y2="39" stroke="#111" strokeWidth="2.2" />
      </svg>
    );
  }
  return (
    <svg width="270" height="56" viewBox="0 0 270 56">
      <text x="87.5" y="36" fontSize="24" fontFamily={serif} fill="#222" textAnchor="middle">420</text>
      <rect x="131" y="5" width="77" height="50" rx="1" fill="none" stroke="#111" strokeWidth="2" />
      <path d="M179 19l17-12M192.6 32L206 15" stroke="#111" strokeWidth="2.2" />
      <text x="139" y="44" fontSize="24" fontFamily={serif} fill="#f02020">{s}</text>
    </svg>
  );
};

const leftRows: Record<number, number> = { 0: 1, 1: 35, 2: 1, 3: 12, 4: 1, 19: 19, 20: 14, 21: 14, 22: 19, 25: 15, 26: 12, 33: 10 };
const leftText: Record<number, string> = { 0: ')', 1: '墙(RF)', 2: ')', 3: '(Y)', 4: ')', 19: '(M)', 20: '(R)', 21: '(X)', 22: '(W)', 25: '(D)', 26: '(T)', 33: '(U)' };

type FloorT = { t: string; s: 'off' | 'on' };
const zone = (f: string): FloorT[] => [
  { t: '第4层', s: 'off' }, { t: '第3层', s: 'off' }, { t: '第2层', s: 'off' }, { t: f, s: 'off' }, { t: '首层', s: 'off' }, { t: '基础层', s: 'on' },
];

const App = () => (
  <>
    <Global />
    <Page>
      <TitleBar>
        <Qat>
          <QatSlot $w={20}><Undo c="#5b9de2" /></QatSlot>
          <QatSlot $w={16}><Tri /></QatSlot>
          <QatSlot $w={26}><Redo c="#c4c9cf" /></QatSlot>
          <QatSlot $w={12}><Tri $c="#bbb" /></QatSlot>
          <QatSlot $w={30}>Σ</QatSlot>
          <QatSlot $w={28}><IconCalc s={21} /></QatSlot>
          <QatSlot $w={30}><IconQty s={21} /></QatSlot>
          <QatSlot $w={29}><IconGlasses s={21} /></QatSlot>
          <QatSlot $w={29} $on><IconEdit s={20} /></QatSlot>
          <QatSlot $w={28}><IconRebar s={21} /></QatSlot>
          <QatSlot $w={28}><IconReport s={21} /></QatSlot>
          <QatSlot $w={12}><Tri /></QatSlot>
        </Qat>
        <Title>广联达BIM土建计量平台 GTJ2018 - [F:\3-阳江张小泉项目资料\3-预算手稿汇总\供应链.GTJ]</Title>
        <MinGlyph />
      </TitleBar>

      <TabBar>
        <TabItem $first>工程设置</TabItem>
        <TabItem>建模</TabItem>
        <TabItem>视图</TabItem>
        <TabItem>工具</TabItem>
        <TabItem $on>工程量</TabItem>
        <TabItem>云应用</TabItem>
        <TopRight>
          <SearchTop>自定义贴面怎么处理复杂零星构件的装修?<SearchGlyph c="#bbb" /></SearchTop>
          <TopIcons><UserG /><BellG /><ChatG /><ChatG /></TopIcons>
        </TopRight>
      </TabBar>

      <Ribbon>
        <Group $w={101}>
          <GroupItems><RibbonBtn $w={86}><RibbonIcon><IconSummary /></RibbonIcon><RibbonText>汇总选中图元</RibbonText></RibbonBtn></GroupItems>
        </Group>
        <Group $w={190} $pl={7}>
          <GroupItems>
            <RibbonBtn $w={88}><RibbonIcon><IconCalc /></RibbonIcon><RibbonText>查看计算式</RibbonText></RibbonBtn>
            <RibbonBtn $w={88}><RibbonIcon><IconQty /></RibbonIcon><RibbonText>查看工程量</RibbonText></RibbonBtn>
          </GroupItems>
          <GroupLabel>土建计算结果</GroupLabel>
        </Group>
        <Group $w={248} $pl={7}>
          <GroupItems>
            <RibbonBtn $w={89}><RibbonIcon><IconGlasses /></RibbonIcon><RibbonText>查看钢筋量</RibbonText></RibbonBtn>
            <RibbonBtn $w={70} $on><RibbonIcon><IconEdit /></RibbonIcon><RibbonText>编辑钢筋</RibbonText></RibbonBtn>
            <RibbonBtn $w={74}><RibbonIcon><IconRebar /></RibbonIcon><RibbonText>钢筋三维</RibbonText></RibbonBtn>
          </GroupItems>
          <GroupLabel>钢筋计算结果</GroupLabel>
        </Group>
        <Group $w={102}>
          <GroupItems><RibbonBtn $w={102}><RibbonIcon><IconCheck /></RibbonIcon><RibbonText>合法性检查</RibbonText></RibbonBtn></GroupItems>
          <GroupLabel>检查</GroupLabel>
        </Group>
        <Group $w={97}>
          <GroupItems><RibbonBtn $w={86}><RibbonIcon><IconTable /></RibbonIcon><RibbonText>表格输入</RibbonText></RibbonBtn></GroupItems>
          <GroupLabel>表格输入</GroupLabel>
        </Group>
        <Group $w={88}>
          <GroupItems><RibbonBtn $w={88}><RibbonIcon><IconReport /></RibbonIcon><RibbonText>查看报表</RibbonText></RibbonBtn></GroupItems>
          <GroupLabel>报表</GroupLabel>
        </Group>
        <Group $w={73}>
          <GroupItems><RibbonBtn $w={73}><RibbonIcon><IconCloud /></RibbonIcon><RibbonText>云指标</RibbonText></RibbonBtn></GroupItems>
          <GroupLabel>指标</GroupLabel>
        </Group>
      </Ribbon>

      <SelectBar>
        <SelectFirst>基础层<Tri /></SelectFirst>
        <Select>基础<Tri /></Select>
        <Select>基础梁<Tri /></Select>
        <Select>D2<Tri /></Select>
        <Select>分层1<Tri /></Select>
      </SelectBar>

      <Main>
        <LeftCol>
          <PanelStrip>×</PanelStrip>
          <LeftTabs />
          <LeftTool>
            <ViewBtn><ListG /></ViewBtn>
            <ViewBtn><FormG /></ViewBtn>
          </LeftTool>
          <LeftBody>
            <LeftList>
              {Array.from({ length: 34 }, (_, i) => (
                <LeftRow key={i}>
                  <LeftRowInner>
                    {i === 18 ? <LeftSel /> : leftText[i] ? <LeftText $end={leftRows[i]}>{leftText[i]}</LeftText> : null}
                  </LeftRowInner>
                </LeftRow>
              ))}
            </LeftList>
            <LeftScroll><Thumb $w={10} $h={704} /></LeftScroll>
          </LeftBody>
        </LeftCol>
        <GutterA />
        <MidCol>
          <Panel $h={599}>
            <PanelStrip>×</PanelStrip>
            <MidTabs><MidTab $on>构件列表</MidTab><MidTab>图纸管理</MidTab></MidTabs>
            <MidTool>
              <ToolPair $w={78}><NewDoc />新建<Tri /></ToolPair>
              <ToolPair $w={64}><CopyDoc />复制</ToolPair>
              <ToolPair $w={65}><DelDoc />删除</ToolPair>
              <ToolPair $w={125}><LayerDoc />层间复制</ToolPair>
              <Nav $w={10}>▸▸</Nav>
            </MidTool>
            <MidSearch>搜索构件...<SearchGlyph c="#4a9fe0" /></MidSearch>
            <TreeWrap>
              <TreeRow $pl={12}><TreeTri />基础梁</TreeRow>
              <TreeRow $pl={37}><TreeTri />基础主梁</TreeRow>
              <TreeSel>D2</TreeSel>
            </TreeWrap>
          </Panel>
          <Panel $h={537}>
            <PanelStrip>×</PanelStrip>
            <MidTabs><MidTab $on>属性列表</MidTab><MidTab>图层管理</MidTab></MidTabs>
            <PropBody>
              <PropTable>
                <PropHead>
                  <PropHeadCell />
                  <PropHeadCell>属性名称</PropHeadCell>
                  <PropHeadCell $on>属性值</PropHeadCell>
                </PropHead>
                {props.map(r => (
                  <PropRow key={r.n}>
                    <PropNum $on={r.focus}>{r.n}</PropNum>
                    <PropName $blue={r.blue}>{r.name}</PropName>
                    <PropVal $gray={r.gray} $focus={r.focus}><PropValue v={r.val || ''} /></PropVal>
                  </PropRow>
                ))}
              </PropTable>
              <PropGutter><Thumb $w={10} $h={216} /></PropGutter>
            </PropBody>
          </Panel>
        </MidCol>
        <HandleCol><VHandle $w={5} /></HandleCol>
        <Center>
          <CanvasRow>
            <CanvasWrap>
              <CadDrawing />
              <SideTool>
                <SideIcon>
                  <circle cx="14" cy="16" r="11" fill="#c8d4e2" stroke="#5b6b7d" /><ellipse cx="14" cy="18" rx="14" ry="5" fill="none" stroke="#dfe7f0" strokeWidth="1.5" transform="rotate(-40 14 16)" /><circle cx="21" cy="9" r="6" fill="#a3afbd" stroke="#5b6b7d" />
                </SideIcon>
                <SideGap $h={8} />
                <SideIcon>
                  <rect x="0.5" y="0.5" width="29" height="29" fill="#8096b2" stroke="#50647a" /><text x="26" y="26" fontSize="10" textAnchor="end" fontFamily="Liberation Sans" fill="#26303c">2D</text>
                </SideIcon>
                <SideGap $h={9} />
                <SideIcon>
                  <path d="M1 7L7 1h22v22l-6 6H1z" fill="#d5e6fb" stroke="#4a5a6c" /><path d="M1 7h22v22M23 7l6-6M6 7v17h17" fill="none" stroke="#4a5a6c" />
                </SideIcon>
                <SideGap $h={20}><Tri $c="#3c4248" /></SideGap>
                <SideIcon>
                  <path d="M1 7L7 1h22v22l-6 6H1z" fill="#7c90aa" stroke="#3e4c5c" /><path d="M1 7h22v22M23 7l6-6" fill="none" stroke="#3e4c5c" />
                </SideIcon>
                <SideGap $h={21}><Tri $c="#3c4248" /></SideGap>
                <SideIcon>
                  <path d="M24 6A13 13 0 1 0 27 20" fill="none" stroke="#3e4c5c" strokeWidth="2" /><path d="M17 2l8 4-2 7" fill="none" stroke="#3e4c5c" strokeWidth="1.5" />
                </SideIcon>
                <SideGap $h={20}><Tri $c="#3c4248" /></SideGap>
                <SideSep />
                <SideIcon>
                  <rect x="0.5" y="0.5" width="29" height="29" fill="#8c9db4" stroke="#4a5a6c" /><path d="M0 5h30M15 5v25" stroke="#4a5a6c" /><path d="M4 10h3M4 15h3M4 20h3M4 25h3M19 10h3M19 15h3M19 20h3M19 25h3" stroke="#1c2430" strokeWidth="2" />
                </SideIcon>
              </SideTool>
            </CanvasWrap>
            <HandleCol><VHandle $w={6} /></HandleCol>
          </CanvasRow>
          <HRow><HHandle /></HRow>
          <EditPanel>
            <PanelStrip>×</PanelStrip>
            <EditHead>编辑钢筋</EditHead>
            <EditBox>
              <EditTool>
                <Nav $w={21} $c="#bbb">|&lt;</Nav>
                <Nav $w={21} $c="#bbb">&lt;</Nav>
                <Nav $w={19}>&gt;</Nav>
                <Nav $w={33}>&gt;|</Nav>
                <ToolPair $w={30}><UpBox c="#c8c8c8" d="M8.5 20V9M4 13l4.5-5 4.5 5" /></ToolPair>
                <ToolPair $w={31}><UpBox c={B} d="M8.5 8v11M4 14l4.5 5 4.5-5" /></ToolPair>
                <ToolPair $w={62}><InsertG />插入</ToolPair>
                <ToolPair $w={66}><DelDoc />删除</ToolPair>
                <ToolPair $w={95}><ScaleG />缩尺配筋</ToolPair>
                <ToolPair $w={94}><InfoG />钢筋信息</ToolPair>
                <ToolPair $w={96}><LibG />钢筋图库</ToolPair>
                <ToolPair $w={77}><OtherG />其他<Tri /></ToolPair>
                单构件钢筋总重(kg)：923.390
              </EditTool>
              <EditBody>
                <TableCol>
                  <HeadRow>
                    <HeadCell />
                    <HeadCell $on>筋号</HeadCell>
                    {heads.map((h, i) => (
                      <HeadCell key={i}>{i === 6 ? <HeadTwoLine>弯曲调整<br />(mm)</HeadTwoLine> : h}</HeadCell>
                    ))}
                  </HeadRow>
                  {rebars.map((r, i) => (
                    <BodyRow key={i}>
                      <RowHead $on={i === 0}>{i + 1}</RowHead>
                      <NameCell $sel={i === 0}>{r.name}</NameCell>
                      <Cell><Sq>{r.d}</Sq></Cell>
                      <GradeCell>虫</GradeCell>
                      <Cell><Sq>{r.fig}</Sq></Cell>
                      <ShapeCell><RebarShape s={r.shape} /></ShapeCell>
                      <Cell><Sq>{r.f}</Sq></Cell>
                      <DescCell>{r.desc}</DescCell>
                      <Cell><Sq>{r.bend}</Sq></Cell>
                      <Cell><Sq>{r.len}</Sq></Cell>
                      <Cell><Sq>{r.cnt}</Sq></Cell>
                      <Cell><Sq>0</Sq></Cell>
                      <Cell><Sq>0</Sq></Cell>
                      <Cell><Sq>{r.w}</Sq></Cell>
                    </BodyRow>
                  ))}
                  <Empty $empty>
                    <RowHead>9</RowHead>
                    <Cell /><Cell /><Cell /><Cell /><Cell /><Cell />
                  </Empty>
                  <HBar><Thumb $w={1032} $h={10} /></HBar>
                </TableCol>
                <VGutter><Thumb $w={10} $h={423} /></VGutter>
              </EditBody>
            </EditBox>
          </EditPanel>
        </Center>
        <RightCol>
          <PanelStrip />
          <RightHead>显示设置</RightHead>
          <RightTabs><RightTab>图元显示</RightTab><RightTab $on>楼层显示</RightTab></RightTabs>
          <RadioRow>
            <RadioItem><Radio $on />当前楼层</RadioItem>
            <RadioItem><Radio />相邻楼层</RadioItem>
            <Radio />
          </RadioRow>
          <FloorTree>
            <FloorRow $dim><FloorTri /><Box $state="dimpart"><BoxInner $c="#f8f8f8" /></Box>供应链</FloorRow>
            {['第3层', '第2层', '首层'].map(t => (
              <FloorRow key={t} $child $dim><Box $state="dimoff" />{t}</FloorRow>
            ))}
            <FloorRow $child $dim><Box $state="dimon"><CheckMark c="#aaa" /></Box>基础层</FloorRow>
            {[['a区', '夹层1a'], ['b区', '夹层1a'], ['c区', '夹层la']].map(([z, f]) => (
              <React.Fragment key={z}>
                <FloorRow><FloorTri /><Box $state="part"><BoxInner $c="#9cc7fb" /></Box>{z}</FloorRow>
                {zone(f).map(x => (
                  <FloorRow key={x.t} $child><Box $state={x.s}>{x.s === 'on' && <CheckMark />}</Box>{x.t}</FloorRow>
                ))}
              </React.Fragment>
            ))}
          </FloorTree>
          <RightFoot><FootBox $state="on"><CheckMark /></FootBox>其他区域图元亮显</RightFoot>
        </RightCol>
      </Main>

      <BottomStrip>
        <Stub $w={30} $ml={0} />
        <Stub $w={43} $ml={5} $on />
        <Stub $w={31} $ml={8} />
        <Stub $w={43} $ml={9} />
        <Stub $w={44} $ml={5} />
        <Stub $w={90} $ml={5} />
        <Stub $w={75} $ml={5} />
      </BottomStrip>

      <Pop>
        这里是专家用户独有
        <br />
        建议反馈通道哦~
        <PopBtn>知道了</PopBtn>
        <PopBulb width="34" height="44" viewBox="0 0 34 44">
          <g fill="none" stroke="#bcd9f8" strokeWidth="1.4">
            <path d="M17 10a9 9 0 0 1 5 16v6H12v-6a9 9 0 0 1 5-16zM13 36h8M14 40h6M17 32V20M13 18l4 4 4-4M17 1v5M4 6l4 4M30 6l-4 4M0 20h5M29 20h5" />
          </g>
        </PopBulb>
      </Pop>
    </Page>
  </>
);

export default App;
